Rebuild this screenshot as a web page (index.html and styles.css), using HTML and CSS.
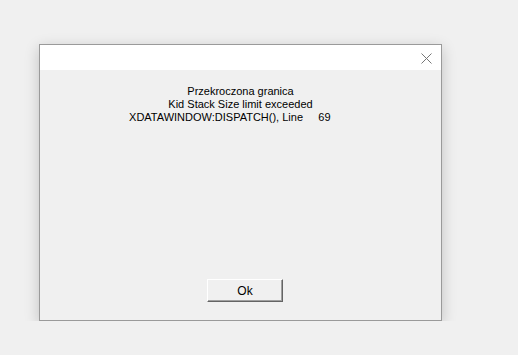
FILE: index.html
```html
<!DOCTYPE html>
<html lang="pl">
<head>
  <meta charset="UTF-8">
  <title>Przekroczona granica</title>
  <link rel="stylesheet" href="styles.css">
</head>
<body>
  <div class="dialog">
    <!-- Title bar -->
    <div class="titlebar">
      <button class="close-btn" title="Zamknij">
        <svg width="11" height="11" viewBox="0 0 11 11">
          <path d="M0.5 0.5 L10.5 10.5 M10.5 0.5 L0.5 10.5" stroke="#767676" stroke-width="1" fill="none"/>
        </svg>
      </button>
    </div>

    <!-- Message + button -->
    <div class="content">
      <div class="message">
        <p>Przekroczona granica</p>
        <p>Kid Stack Size limit exceeded</p>
        <p class="pre">XDATAWINDOW:DISPATCH(), Line     69       </p>
      </div>
      <div class="actions">
        <button class="ok-btn">Ok</button>
      </div>
    </div>
  </div>
</body>
</html>
```

FILE: styles.css
```css
body {
  margin: 0;
  padding: 44px 0 0 39px;
  background: #f0f0f0;
  font-family: "Liberation Sans", Arial, sans-serif;
  font-size: 11px;
  color: #000;
}

.dialog {
  box-sizing: border-box;
  width: 403px;
  height: 277px;
  border: 1px solid #9a9a9a;
  background: #f0f0f0;
  box-shadow: 0 4px 14px rgba(0,0,0,0.2);
  display: flex;
  flex-direction: column;
}

.titlebar {
  height: 25px;
  background: #fff;
  display: flex;
  justify-content: flex-end;
  align-items: center;
}

.close-btn {
  border: none;
  background: none;
  padding: 0;
  width: 11px;
  height: 11px;
  margin-right: 9px;
  margin-top: 1px;
  display: flex;
}

.content {
  flex: 1;
  display: flex;
  flex-direction: column;
}

.message {
  padding-top: 15px;
  text-align: center;
}

.message p {
  margin: 0;
  line-height: 13px;
}

.pre {
  white-space: pre;
}

.actions {
  margin-top: auto;
  margin-bottom: 18px;
  padding-left: 167px;
}

.ok-btn {
  box-sizing: border-box;
  width: 76px;
  height: 23px;
  padding: 0;
  background: #f0f0f0;
  border: 1px solid;
  border-color: #fff #646464 #646464 #fff;
  box-shadow: inset -1px -1px #a0a0a0;
  font-family: "Liberation Sans", Arial, sans-serif;
  font-size: 12px;
  color: #000;
}
```
